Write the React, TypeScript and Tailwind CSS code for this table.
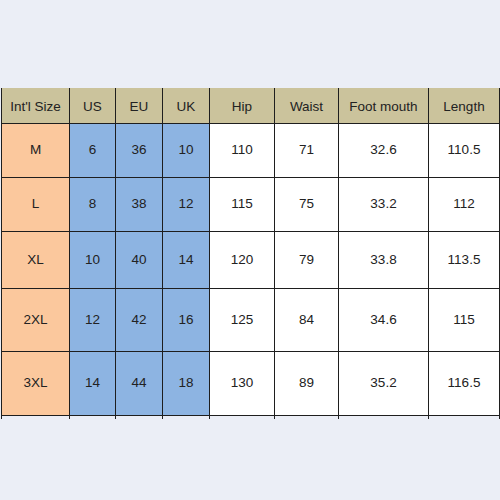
const headers = ["Int'l Size", 'US', 'EU', 'UK', 'Hip', 'Waist', 'Foot mouth', 'Length'];

const rows = [
  { h: 'h-[53px]', cells: ['M', '6', '36', '10', '110', '71', '32.6', '110.5'] },
  { h: 'h-[53px]', cells: ['L', '8', '38', '12', '115', '75', '33.2', '112'] },
  { h: 'h-[56px]', cells: ['XL', '10', '40', '14', '120', '79', '33.8', '113.5'] },
  { h: 'h-[62px]', cells: ['2XL', '12', '42', '16', '125', '84', '34.6', '115'] },
  { h: 'h-[63px]', cells: ['3XL', '14', '44', '18', '130', '89', '35.2', '116.5'] },
];

function cellBg(col: number) {
  if (col === 0) return 'bg-[#fbc89d]';
  if (col <= 3) return 'bg-[#8db4e2]';
  return 'bg-white';
}

export default function App() {
  return (
    <div
      className="w-[500px] h-[500px] bg-[#ebeef6] pt-[88px] pl-px text-[13.5px] text-[#222]"
      style={{ fontFamily: '"Liberation Sans", Arial, sans-serif' }}
    >
      <div className="grid grid-cols-[67px_45px_46px_46px_64px_63px_89px_70px] gap-px bg-[#1e1e1e] px-px w-[499px]">
        {headers.map((t) => (
          <div key={t} className="h-[35px] pt-[3px] bg-[#cbc39c] flex items-center justify-center">
            {t}
          </div>
        ))}
        {rows.map((r) =>
          r.cells.map((t, i) => (
            <div key={r.cells[0] + i} className={`${r.h} ${cellBg(i)} flex items-center justify-center`}>
              {t}
            </div>
          ))
        )}
        {headers.map((t) => (
          <div key={'tick' + t} className="h-[3px] bg-[#ebeef6]" />
        ))}
      </div>
    </div>
  );
}
